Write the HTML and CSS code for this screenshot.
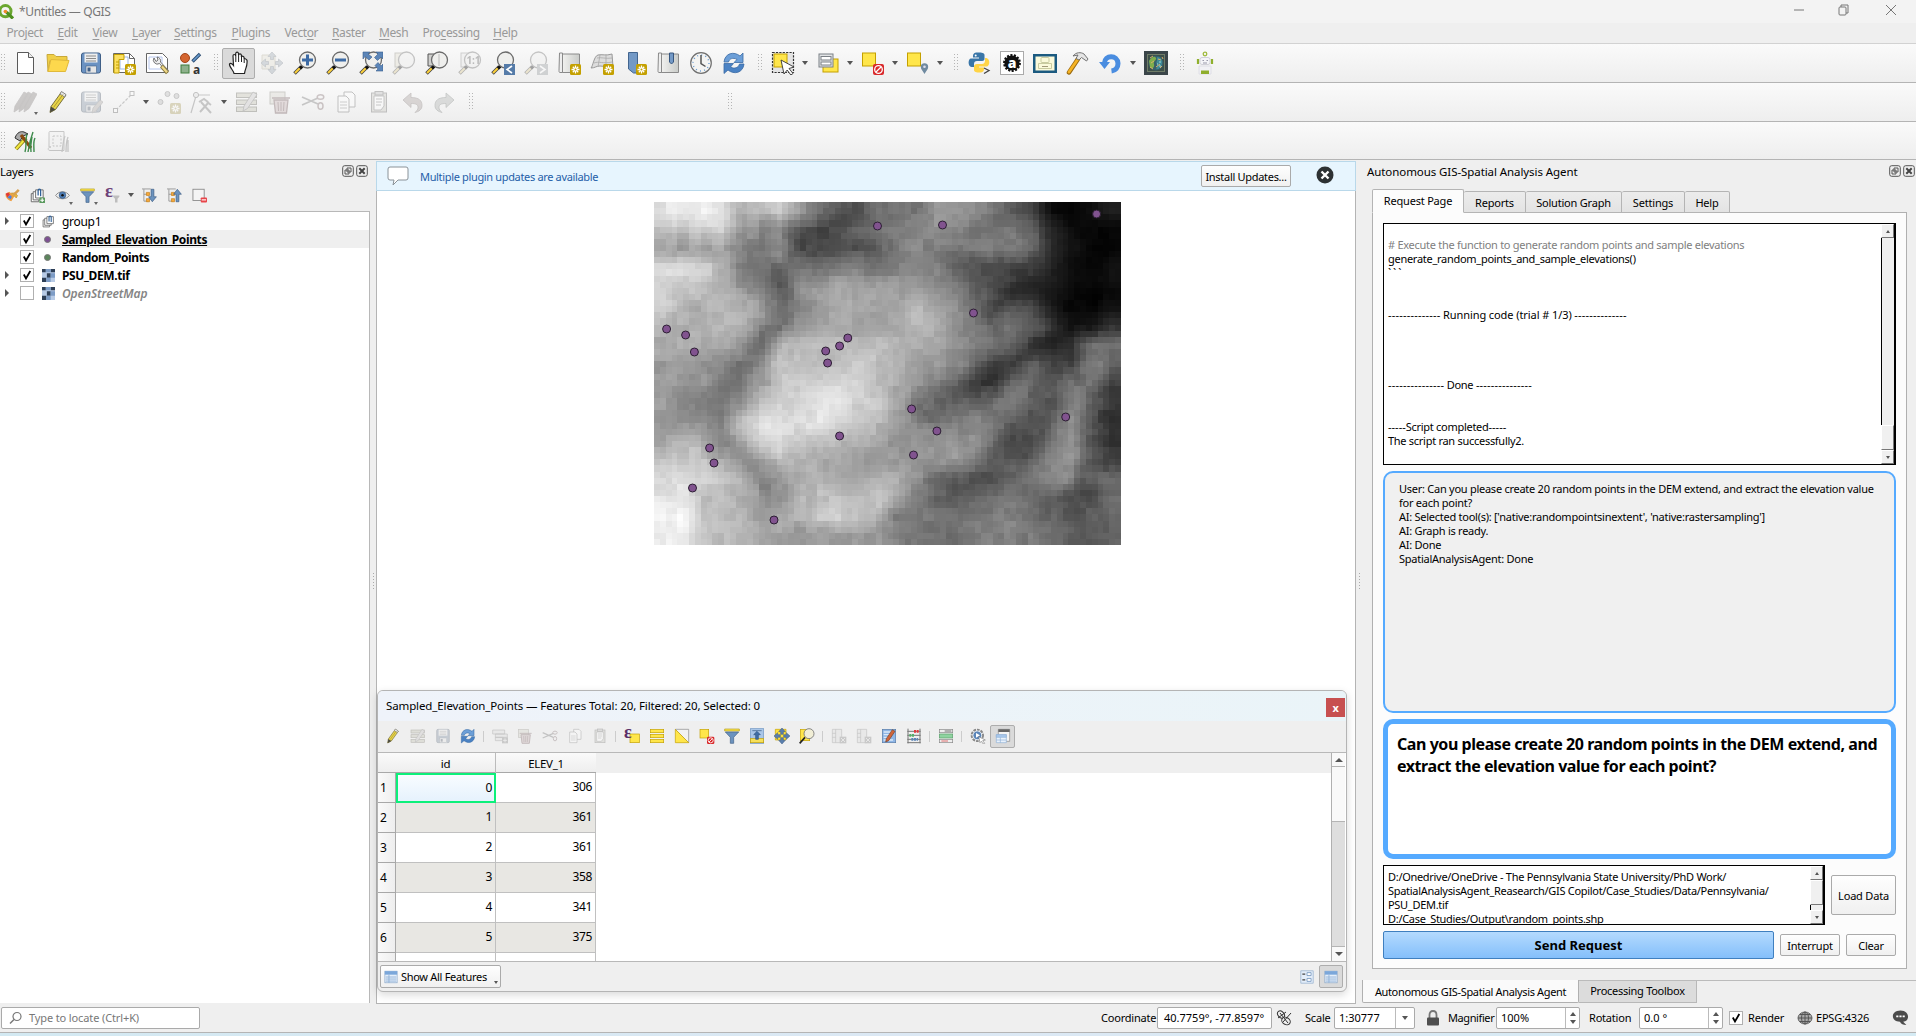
FILE: index.html
```html
<!DOCTYPE html>
<html lang="en">
<head>
<meta charset="utf-8">
<title>*Untitles — QGIS</title>
<link rel="stylesheet" href="styles.css">
</head>
<body>
<svg class="defs" width="0" height="0">
<defs>
<linearGradient id="gg" x1="0" y1="0" x2="1" y2="0"><stop offset="0" stop-color="#f2f2f0"/><stop offset="1" stop-color="#c9cbc8"/></linearGradient>
</defs>
<symbol id="star" viewBox="0 0 24 24"><rect x="13" y="13" width="11" height="11" rx="1.500" fill="#c4a000"/><path d="M18.500 14.500v8M14.500 18.500h8M15.800 15.800l5.400 5.400M21.200 15.800l-5.400 5.400" stroke="#fff" stroke-width="1.300"/><circle cx="18.500" cy="18.500" r="1" fill="#c4a000"/></symbol>
<symbol id="lens" viewBox="0 0 24 24"><path d="M1.500 22.500l7-7" stroke="#444" stroke-width="3.600"/><path d="M2 22l5-5" stroke="#fcd03a" stroke-width="2"/><path d="M7 17.500l3-3" stroke="#111" stroke-width="3"/><circle cx="14.500" cy="9" r="8" fill="#efefed" stroke="#6b6b6b" stroke-width="1.300"/></symbol>
<symbol id="new" viewBox="0 0 24 24"><path d="M4.500 1.500h11l5 5v16h-16z" fill="#fff" stroke="#5a5a5a"/><path d="M15.500 1.500v5h5" fill="#eee" stroke="#5a5a5a"/></symbol>
<symbol id="open" viewBox="0 0 24 24"><path d="M1 3.500h7l2 2h11v4H4L2 20.500z" fill="#f0cf47" stroke="#c9a93a"/><path d="M5 8.500l18 1-3.500 11H2z" fill="#fdd84d" stroke="#e0b93a"/></symbol>
<symbol id="save" viewBox="0 0 24 24"><rect x="2.500" y="2" width="19" height="20" rx="2" fill="#6b92c2" stroke="#3f5f87"/><rect x="5.500" y="2.500" width="13" height="9" fill="#eee"/><path d="M7 5h10M7 7.500h10M7 10h10" stroke="#8a8a8a"/><rect x="7" y="15" width="10.500" height="7" fill="#e6e6e6" stroke="#3f5f87" stroke-width=".6"/><rect x="8.500" y="16.500" width="3" height="4" fill="#3f5f87"/></symbol>
<symbol id="layout" viewBox="0 0 24 24"><path d="M1.500 2.500h16l5 5v14h-21z" fill="#fff" stroke="#666"/><path d="M17.500 2.500v5h5" fill="none" stroke="#666"/><path d="M8 6h8v12H8z" fill="#fff" stroke="#9db7e8"/><path d="M2 3.500h10v5H7V22H2z" fill="#fce060" stroke="#c4a000"/><path d="M4 11h3M4 14h3M4 17h3" stroke="#c4a000"/><use href="#star"/></symbol>
<symbol id="wrench" viewBox="0 0 24 24"><path d="M1.500 2.500h16l5 5v14h-21z" fill="#fff" stroke="#666"/><path d="M4 6h13v12H4z" fill="none" stroke="#b6c6ee"/><path d="M9 7a4 4 0 005.500 5.500L22 21l1.500-1.500-8-8.500A4 4 0 0012 6l1 3-2 1.500z" fill="#eee" stroke="#666" stroke-width=".9"/><path d="M16.500 15l6 7" stroke="#8a7a3a" stroke-width="4"/><path d="M17 15.500l5 5.800" stroke="#f0d98a" stroke-width="2.200"/></symbol>
<symbol id="style" viewBox="0 0 24 24"><circle cx="7" cy="7" r="4.500" fill="#d4652f" stroke="#a34417"/><rect x="3" y="14" width="8" height="8" fill="#8eb18c" stroke="#3f7d3c"/><path d="M14.500 10.500L22 3" stroke="#27486e" stroke-width="3.400"/><path d="M15 10l6.500-6.500" stroke="#6b9ccf" stroke-width="1.600"/><text x="15" y="22.500" font-family="Open Sans" font-size="12" fill="#333">a</text></symbol>
<symbol id="hand" viewBox="0 0 24 24"><path d="M7 22.500c-.5-3-5-7-4.500-9.500.8-1.500 2.500-.5 4 1.500L6 5c0-2 2.300-2 2.700 0V2.500c.3-1.800 2.500-1.800 2.800 0V4c.4-1.500 2.600-1.500 2.900.2V6c.7-1.300 2.700-1 2.700 1l1.400 1c1.600 0 1.800 2 1.500 4 0 4-2 6-2.500 10.500z" fill="#fff" stroke="#222" stroke-width="1.200"/><path d="M8.800 5v6M11.600 4v7M14.500 5.500V11M17.200 7v5" stroke="#222" stroke-width="1"/></symbol>
<symbol id="pansel" viewBox="0 0 24 24"><path d="M2 4h13v14H2z" fill="#e9e2bf" stroke="#b8ae7c"/><path d="M12 1l4 4.500h-2.500v3h-3v-3H8zM12 23l-4-4.500h2.500v-3h3v3H16zM1 12l4.500-4v2.500h3v3h-3V16zM23 12l-4.500 4v-2.500h-3v-3h3V8z" fill="#8fa9c4" stroke="#5e7993" stroke-width=".7"/></symbol>
<symbol id="pany" viewBox="0 0 24 24"><path d="M2 2h16v16H2z" fill="#ffe23c" stroke="#c4a000"/><path d="M12 0l5 5.500h-3v4h-4v-4H7zM12 24l-5-5.500h3v-4h4v4h3zM0 12l5.500-5v3h4v4h-4v3zM24 12l-5.500 5v-3h-4v-4h4V7z" fill="#5b7fae" stroke="#36567f" stroke-width=".7"/></symbol>
<symbol id="zin" viewBox="0 0 24 24"><use href="#lens"/><path d="M14.500 3.500v11M9 9h11" stroke="#3d6ba5" stroke-width="3"/></symbol>
<symbol id="zout" viewBox="0 0 24 24"><use href="#lens"/><path d="M9 9h11" stroke="#3d6ba5" stroke-width="3"/></symbol>
<symbol id="zfull" viewBox="0 0 24 24"><use href="#lens"/><path d="M4 1h7L9 3l4 3-3 3-4-3.500L4 8zM24 1v7l-2-2-3.500 3.500-3-3L19 3l-2-2zM24 20h-7l2-2-3-3.500 3-3L22 15l2-2z" fill="#5b85b8" stroke="#3b5f8d" stroke-width=".6"/></symbol>
<symbol id="zsel" viewBox="0 0 24 24"><rect x="3" y="2" width="11" height="14" fill="#e6dfb8" stroke="#8f8a6d"/><use href="#lens"/></symbol>
<symbol id="zlay" viewBox="0 0 24 24"><path d="M3 3h10v12H3z" fill="#d0d0ce" stroke="#555"/><use href="#lens"/><path d="M14 3v12" stroke="#bbb"/></symbol>
<symbol id="znat" viewBox="0 0 24 24"><rect x="3" y="2" width="11" height="14" fill="#e8e8e8" stroke="#888"/><use href="#lens"/><text x="8.500" y="13" font-family="Open Sans" font-weight="700" font-size="10" fill="#555">1:1</text></symbol>
<symbol id="zlast" viewBox="0 0 24 24"><use href="#lens"/><rect x="13" y="13" width="11" height="11" fill="#557ba8"/><path d="M21 15l-5 3.500 5 3.500" fill="none" stroke="#fff" stroke-width="1.600"/></symbol>
<symbol id="znext" viewBox="0 0 24 24"><use href="#lens"/><rect x="13" y="13" width="11" height="11" fill="#8f9aa5"/><path d="M16 15l5 3.500-5 3.500" fill="none" stroke="#fff" stroke-width="1.600"/></symbol>
<symbol id="map" viewBox="0 0 24 24"><path d="M5 3h17.500v18.500H5z" fill="url(#gg)" stroke="#8a8a8a"/><path d="M2.500 2h3v19.500H3c-1 0-1-1-1-2z" fill="#eee" stroke="#8a8a8a"/></symbol>
<symbol id="nmap" viewBox="0 0 24 24"><use href="#map"/><use href="#star"/></symbol>
<symbol id="n3d" viewBox="0 0 24 24"><path d="M1 17c2-2 3-12 7-13 4-1 8 1 14-1l1 13c-6 1-8-1-13-1-4 0-5 2-9 2z" fill="#ddd" stroke="#999"/><path d="M4 12c5-2 9 1 18-1M7 7c4-1 9 1 15 0M10 4L8 16M16 4v12" stroke="#aaa" fill="none" stroke-width=".8"/><use href="#star"/></symbol>
<symbol id="bmk" viewBox="0 0 24 24"><path d="M5.500 1.500h9V22h-4l-5-4z" fill="#7399c6" stroke="#42658f"/><use href="#star"/></symbol>
<symbol id="bmap" viewBox="0 0 24 24"><use href="#map"/><path d="M13.500 2h4v9l-2 2-2-2z" fill="#7399c6" stroke="#36567f"/></symbol>
<symbol id="clock" viewBox="0 0 24 24"><circle cx="12" cy="12" r="10.300" fill="#f4f4f2" stroke="#707070" stroke-width="1.200"/><circle cx="12" cy="12" r="8" fill="none" stroke="#6a9bd0" stroke-width="1.400" stroke-dasharray="1 3.190"/><path d="M12 4v8.500l4.500 3" fill="none" stroke="#555" stroke-width="1.500"/></symbol>
<symbol id="refresh" viewBox="0 0 24 24"><path d="M2 11C3 2 12 0 18 5l3-3v9.500h-9L15 8.500C11 6 7 8 6.500 11z" fill="#6c9fd8" stroke="#3b6ba5" stroke-width=".8"/><path d="M22 13c-1 9-10 11-16 6l-4 3.500v-10h9.500L8.500 16c4 2.500 8 .5 9-3z" fill="#4a82c4" stroke="#3b6ba5" stroke-width=".8"/></symbol>
<symbol id="sel" viewBox="0 0 24 24"><rect x="1.500" y="1.500" width="21" height="20" fill="#e4e4e4" stroke="#333" stroke-width="1.200" stroke-dasharray="2.200 1.200"/><rect x="3" y="3" width="13" height="13" fill="#ffe64a" stroke="#c4a000"/><path d="M10 9l13 7-5 1.500 4 5-2.200 1.500-3.600-5-3.200 4z" fill="#fff" stroke="#333" stroke-width=".9"/></symbol>
<symbol id="selv" viewBox="0 0 24 24"><rect x="7" y="8" width="15" height="13" fill="#ffe64a" stroke="#c4a000"/><rect x="3" y="3" width="14" height="13" fill="#e2e4e6" stroke="#7b8086"/><rect x="5" y="5.500" width="10" height="3.500" fill="#fff" stroke="#7b8086"/><rect x="5" y="11" width="10" height="3" fill="#fff" stroke="#7b8086"/></symbol>
<symbol id="dsel" viewBox="0 0 24 24"><rect x="1.500" y="2" width="13" height="13" fill="#ffe64a" stroke="#c4a000"/><rect x="12" y="13" width="11" height="11" rx="2" fill="#d9292b"/><circle cx="17.500" cy="18.500" r="3.800" fill="none" stroke="#fff" stroke-width="1.300"/><path d="M15 21l5-5" stroke="#fff" stroke-width="1.300"/></symbol>
<symbol id="spos" viewBox="0 0 24 24"><rect x="1.500" y="2" width="13" height="13" fill="#ffe64a" stroke="#c4a000"/><path d="M18.500 23c-1.500-3-3.700-4.500-3.700-7a3.700 3.700 0 017.400 0c0 2.500-2.200 4-3.700 7z" fill="#6f8aa0"/><circle cx="18.500" cy="15.800" r="1.300" fill="#dde"/></symbol>
<symbol id="python" viewBox="0 0 24 24"><path d="M11 1.500c-5 0-5 2-5 5h6v1H4c-3 0-3.500 8 .5 8.500h2.500v-3c0-2 1-3 3-3h5c2 0 2.500-1 2.500-2.500V4c0-2-3-2.500-6-2.500z" fill="#3a76a8"/><path d="M12 21.500c5 0 5-2 5-5h-5v-1h7.500c3.500 0 4-7.500 0-8.500H18v2.500c0 2-1 3.500-3 3.500h-5c-2 0-3 1-3 2.500V19c0 2 3 2.500 5 2.500z" fill="#ffd445"/><circle cx="8.700" cy="4.500" r="1" fill="#fff"/><path d="M17 17l5 2.500-5 3" stroke="#444" stroke-width="1.300" fill="none"/></symbol>
<symbol id="aa" viewBox="0 0 24 24"><rect x=".5" y=".5" width="23" height="23" fill="#fff" stroke="#aaa"/><circle cx="12" cy="12" r="7.600" fill="#111" stroke="#111" stroke-width="2.600" stroke-dasharray="2 1.400"/><text x="7.700" y="16.500" font-family="Open Sans" font-weight="800" font-size="14" fill="#fff">a</text></symbol>
<symbol id="frame" viewBox="0 0 24 24"><rect y="3" width="24" height="19" fill="#1b5a80"/><rect x="2.500" y="5.500" width="19" height="14" fill="#fbfadb"/><rect x="8" y="6.500" width="8" height="5" rx="1" fill="none" stroke="#c9cba0"/><path d="M5.500 12.500h13v5h-13z" fill="none" stroke="#c9cba0"/><path d="M9 15.500h6" stroke="#a39a7a"/></symbol>
<symbol id="hammer" viewBox="0 0 24 24"><path d="M3 21.500L12 8" stroke="#9a6a10" stroke-width="4.500" stroke-linecap="round"/><path d="M3 21L12 8" stroke="#f5b324" stroke-width="2.800" stroke-linecap="round"/><path d="M7 5c3-4 8-4 11-2l4 5-1.500 2-5-3.500L13 9l-3-1.500L12 4z" fill="#e5e5e5" stroke="#666" stroke-width=".9"/></symbol>
<symbol id="undo2" viewBox="0 0 24 24"><path d="M5.500 12c0-8 13-9 13.500.5 0 4-2.500 7-6.500 7.500" fill="none" stroke="#4a8de0" stroke-width="5"/><path d="M0 11h11l-5.500 7z" fill="#4a8de0"/></symbol>
<symbol id="ai" viewBox="0 0 24 24"><rect width="24" height="24" fill="#3a4549"/><rect x="3.500" y="3.500" width="17" height="17" fill="#3d4f49" stroke="#6f7c68"/><circle cx="12" cy="12" r="7.500" fill="#38606b"/><path d="M5 10c3-5 6-5 7-3s-3 3-2 6-2 6-4 3z" fill="#7fae4c"/><path d="M13 6c4 0 6 3 5 7s-4 6-6 5c3-3-1-6 1-8z" fill="#3f8a96"/><path d="M6 7l3-2M7 12l3-2M12 16l4-3M14 8l3 1M16 17l2-2M9 18l-3-2M18 6l1 2" stroke="#d9b06a"/><path d="M15 11h2M13 13h1M15 15h2" stroke="#a6dbe0"/></symbol>
<symbol id="robot" viewBox="0 0 24 24"><circle cx="12" cy="3" r="1.800" fill="none" stroke="#9fba3c" stroke-width="1.300"/><rect x="7" y="6.500" width="10" height="7" rx="2" fill="#f4f4f8" stroke="#d0d0d8"/><path d="M5 8v5M19 8v5" stroke="#8fb02c" stroke-width="2.200"/><path d="M9.500 9.500h1.500M13.500 9.500H15M10 12h4" stroke="#99a"/><path d="M6 15h12v8H6z" fill="#f1f1f5" stroke="#dedee6"/><rect x="8" y="19.500" width="8" height="3.500" fill="#8fae2c"/></symbol>
<symbol id="pencil" viewBox="0 0 24 24"><path d="M4 22.500l1-6L15.500 2l4.500 3L9.500 19.500z" fill="#e8d44a" stroke="#6a6232" stroke-width=".9"/><path d="M4 22.500l1-6 4.500 3z" fill="#4b4b42"/><path d="M14 4l1.500-2.500L20 4.500 18.500 7z" fill="#e9e9e9" stroke="#777" stroke-width=".8"/><path d="M7.500 17.500L17 4.500" stroke="#a8962a" stroke-width=".9"/></symbol>
<symbol id="rpencil" viewBox="0 0 24 24"><path d="M7 21l1-5L17 2.500l4 2.500-9.500 14z" fill="#d0643a" stroke="#6a3a22" stroke-width=".9"/></symbol>
<symbol id="pencils" viewBox="0 0 24 24"><path d="M1 22l1-6L11 2l4 2-8.500 14.500zM6 22l1-6L15 2l4 2-8 14.500zM11 22l1-6 8-14 4 2-8 14.500z" fill="#8a7b77" stroke="#7d716e" stroke-width=".8"/></symbol>
<symbol id="savep" viewBox="0 0 24 24"><use href="#save"/><path d="M13 23l1-5 7-8 3 2-7 9z" fill="#b0a5a0" stroke="#777" stroke-width=".7"/></symbol>
<symbol id="line" viewBox="0 0 24 24"><path d="M4 20L20 4" stroke="#777" stroke-width="1.200" stroke-dasharray="3 1.500"/><rect x="1.500" y="18.500" width="4" height="4" fill="#fff" stroke="#666"/><rect x="18" y="1.500" width="4" height="4" fill="#fff" stroke="#666"/></symbol>
<symbol id="pts" viewBox="0 0 24 24"><g fill="#b9b9b9" stroke="#777"><circle cx="3.500" cy="12" r="2.500"/><circle cx="10.500" cy="4" r="2.500"/><circle cx="19.500" cy="6" r="2.500"/></g><use href="#star"/></symbol>
<symbol id="vert" viewBox="0 0 24 24"><path d="M6 6L1 23M6 5h14" stroke="#777" stroke-width="1.200"/><circle cx="6" cy="5" r="2.600" fill="#ddd" stroke="#666"/><path d="M10 22l9-10M11 12l10 11M9 12l5-3 4 3M17 12l4 3" stroke="#777" stroke-width="2" fill="none"/></symbol>
<symbol id="medit" viewBox="0 0 24 24"><g fill="#c5c29a" stroke="#6d6a50"><rect x="1.500" y="3" width="20" height="4.500"/><rect x="1.500" y="10" width="20" height="4.500"/><rect x="1.500" y="17" width="20" height="4.500"/></g><path d="M8 21l1-5L18 2l4 2.500-9.500 14z" fill="#c9c4c4" stroke="#666" stroke-width=".8"/></symbol>
<symbol id="trash" viewBox="0 0 24 24"><rect x="2" y="2" width="15" height="12" fill="#d9d5bd" stroke="#8a8670"/><path d="M4 8h18M6 10h14l-1.500 13h-11z" fill="#dba8ac" stroke="#8f4e55" stroke-width="1.300"/><path d="M10 12l.5 9M13 12v9M16 12l-.5 9" stroke="#8f4e55"/></symbol>
<symbol id="cut" viewBox="0 0 24 24"><path d="M1 7l16 7M1 15L17 8" stroke="#777" stroke-width="1.800"/><ellipse cx="19.500" cy="7" rx="3.300" ry="2.300" fill="none" stroke="#996a6f" stroke-width="1.500"/><ellipse cx="19.500" cy="16" rx="2.500" ry="3.300" fill="none" stroke="#996a6f" stroke-width="1.500"/></symbol>
<symbol id="copy" viewBox="0 0 24 24"><g fill="#fff" stroke="#666"><path d="M10 2h8l3 3v12H10z"/><path d="M4 6h8l3 3v13H4z"/></g><path d="M6 12h7M6 15h7M6 18h7" stroke="#888"/></symbol>
<symbol id="paste" viewBox="0 0 24 24"><rect x="4.500" y="3" width="15" height="19" fill="#c9c6b5" stroke="#666"/><path d="M7 6h10v10l-3 4H7z" fill="#fff" stroke="#777"/><rect x="8" y="1.500" width="8" height="3.500" fill="#bbb" stroke="#666"/><path d="M9 9h6M9 12h6M9 15h5" stroke="#777"/></symbol>
<symbol id="undo" viewBox="0 0 24 24"><path d="M3 10l8-7v4.500c8 0 11 3 11 8 0 4-3 6-7 7 2-2 3-3 3-5 0-3-2-4-7-4v4z" fill="#b39a94" stroke="#7f6a66" stroke-width=".8"/></symbol>
<symbol id="redo" viewBox="0 0 24 24"><path d="M21 10l-8-7v4.500c-8 0-11 3-11 8 0 4 3 6 7 7-2-2-3-3-3-5 0-3 2-4 7-4v4z" fill="#a9b0ac" stroke="#68736e" stroke-width=".8"/></symbol>
<symbol id="grass" viewBox="0 0 24 24"><path d="M3 20L13 9" stroke="#877a1a" stroke-width="4"/><path d="M3 20L13 9" stroke="#f0e640" stroke-width="2.200"/><path d="M2 9c2-6 6-7 9-6l4 2-5 2-3 5z" fill="#aaa" stroke="#333"/><path d="M8 6l10 13" stroke="#8a4a10" stroke-width="3"/><path d="M12 23c2-6 0-12 2-18M15 23c1-7 2-12 5-20M18 23c-1-6 0-9 1-15M21 23c0-7-1-10 1-14" stroke="#3d8a4b" stroke-width="1.400" fill="none"/></symbol>
<symbol id="grass2" viewBox="0 0 24 24"><path d="M4 2.500h14v19H4c-3 0-2-4 1-3.500H3V4c0-1 0-1.500 1-1.500z" fill="#eee" stroke="#777"/><rect x="7" y="7" width="8" height="10" fill="none" stroke="#777" stroke-dasharray="2 1.500"/><path d="M16 23c1-6 1-11 3-16M20 23c0-7 0-10 2-15M22 23V11" stroke="#777" stroke-width="1.300" fill="none"/></symbol>
<symbol id="brush" viewBox="0 0 24 24"><path d="M1 9l6-3 8 7-5 8c-4-1-7-4-9-8z" fill="#ef9d3e"/><path d="M1 9l4-2 3 3-4 5z" fill="#e03838"/><path d="M4 15l4-4 3 3-2 4z" fill="#4a7fe0"/><path d="M10 8l8 8 2-4-4-4z" fill="#e9b93c" stroke="#c48a2a"/><path d="M14 11l8-8" stroke="#d8a050" stroke-width="4"/></symbol>
<symbol id="group" viewBox="0 0 24 24"><g fill="#fff" stroke="#666" stroke-width="1.500"><path d="M2 9h12v13H2z"/><path d="M5 6h12v13H5z"/><path d="M9 3h12v13H9z"/></g><path d="M13 12V4c0-3 4-3 4 0v9" fill="none" stroke="#2f5f96" stroke-width="2"/></symbol>
<symbol id="addgroup" viewBox="0 0 24 24"><use href="#group"/><rect x="15" y="15" width="9" height="9" rx="1" fill="#5a9a5e"/><path d="M19.500 16.500v6M16.500 19.500h6" stroke="#fff" stroke-width="1.800"/></symbol>
<symbol id="eye" viewBox="0 0 24 24"><path d="M1 12c5-8 17-8 22 0-5 7-17 7-22 0z" fill="#eee" stroke="#888" stroke-width="1.500"/><circle cx="12" cy="11.500" r="5.300" fill="#4d7db5" stroke="#36567f"/><circle cx="12" cy="11.500" r="2" fill="#111"/></symbol>
<symbol id="funnel" viewBox="0 0 24 24"><path d="M1 1.500h22v3H1z" fill="#ffe64a" stroke="#b09a20"/><path d="M2 6h20l-7.500 8v9h-5v-9z" fill="#6c93be" stroke="#3f5f87"/></symbol>
<symbol id="eps" viewBox="0 0 24 24"><text x="0" y="15" font-family="Liberation Serif" font-weight="700" font-size="30" fill="#6d4379">ε</text><path d="M13 12h10v2l-3 3v6h-4v-6l-3-3z" fill="#bdbdbd"/></symbol>
<symbol id="expand" viewBox="0 0 24 24"><path d="M0 1.500h14M3 2v19h7M3 10h7" stroke="#8a8a8a" stroke-width="1.300" fill="none"/><path d="M7 7h5v5H7zM7 17h5v5H7z" fill="#f6a83a" stroke="#c07a10"/><path d="M14.500 2h4.500v12h4l-6.500 8-6-8h4z" fill="#6c93be" stroke="#36567f"/></symbol>
<symbol id="collapse" viewBox="0 0 24 24"><path d="M0 1.500h14M3 2v19h7M3 10h7" stroke="#8a8a8a" stroke-width="1.300" fill="none"/><path d="M7 7h5v5H7zM7 17h5v5H7z" fill="#f6a83a" stroke="#c07a10"/><path d="M14.500 22h4.500V10h4l-6.500-8-6 8h4z" fill="#6c93be" stroke="#36567f"/></symbol>
<symbol id="remove" viewBox="0 0 24 24"><rect x="1.500" y="2" width="18" height="18" fill="#f4f4f4" stroke="#888" stroke-width="1.400"/><rect x="14" y="15" width="10" height="8" rx="1.500" fill="#e8454a"/><path d="M15.500 19h7" stroke="#fff" stroke-width="1.800"/></symbol>
<symbol id="raster" viewBox="0 0 12 12"><rect width="12" height="12" fill="#b8cbe6"/><path d="M0 0h3.500v3H0zM8 0h4v3H8zM4.500 4h3.500v4H4.500zM0 8h4v4H0z" fill="#2e3f56"/><path d="M3.500 0H8v3H3.500zM8 4h4v4H8zM4 8h4v4H4z" fill="#7d9cc6"/></symbol>
<symbol id="rows" viewBox="0 0 24 24"><g fill="#ffe64a" stroke="#c4a000"><rect x="2" y="2" width="20" height="5"/><rect x="2" y="9.500" width="20" height="5"/><rect x="2" y="17" width="20" height="5"/></g></symbol>
<symbol id="inv" viewBox="0 0 24 24"><path d="M2 2h20v20z" fill="#f2f2f2" stroke="#888"/><path d="M2 2v20h20z" fill="#ffe64a" stroke="#c4a000"/></symbol>
<symbol id="esel" viewBox="0 0 24 24"><rect x="9" y="9" width="14" height="13" fill="#ffe64a" stroke="#c4a000"/><text x="0" y="15" font-family="Liberation Serif" font-weight="700" font-size="27" fill="#5b3068">ε</text></symbol>
<symbol id="totop" viewBox="0 0 24 24"><rect x="2" y="1" width="20" height="22" fill="#a9c6e8" stroke="#6f95c2"/><rect x="2" y="16" width="20" height="6" fill="#f7e05a" stroke="#c4a000"/><path d="M5 4h14M12 5l5 5h-3v7h-4v-7H7z" fill="#3f6ea8" stroke="#2f5580"/></symbol>
<symbol id="zmy" viewBox="0 0 24 24"><rect x="2" y="2" width="14" height="17" fill="#ffe64a" stroke="#c4a000"/><path d="M1 23l8-9" stroke="#222" stroke-width="2.500"/><circle cx="15" cy="8.500" r="7.500" fill="#f1eed6" stroke="#777" stroke-width="1.300"/></symbol>
<symbol id="tbl" viewBox="0 0 24 24"><rect x="1.500" y="2" width="21" height="20" fill="#e4eefa" stroke="#7b9cc2"/><rect x="1.500" y="2" width="21" height="6" fill="#7ba7da"/><path d="M8.500 8v14M3 12h18M3 15.500h18M3 19h18" stroke="#8fb0d6" stroke-width="1.500"/></symbol>
<symbol id="addrow" viewBox="0 0 24 24"><path d="M1 3h18v6H1zM5 9h18v5H5zM5 14h12v5H5z" fill="#ddd" stroke="#777"/><rect x="15" y="14" width="9" height="9" fill="#888"/><path d="M19.500 15.500v6M16.500 18.500h6" stroke="#fff"/></symbol>
<symbol id="col" viewBox="0 0 24 24"><path d="M2 2h14v20H2zM7 2v20M2 8h5M2 14h5" fill="#ddd" stroke="#777"/><rect x="13" y="13" width="10" height="10" fill="#888"/><path d="M15 15l6 6M21 15l-6 6" stroke="#fff"/></symbol>
<symbol id="calced" viewBox="0 0 24 24"><rect x="2" y="2" width="20" height="20" fill="#8fb6e6" stroke="#5579a5"/><path d="M4 6h12M4 10h10M4 14h8M4 18h14" stroke="#dce9f8" stroke-width="2"/><use href="#rpencil"/></symbol>
<symbol id="abacus" viewBox="0 0 24 24"><path d="M3 1v22M21 1v22M2 5h20M2 11h20M2 17h20M2 22h20" stroke="#777" stroke-width="1.500"/><path d="M12 5h7" stroke="#e0393d" stroke-width="4" stroke-dasharray="3 1"/><path d="M5 11h7" stroke="#55b06a" stroke-width="4" stroke-dasharray="3 1"/><path d="M8 17h10" stroke="#5b85b8" stroke-width="4" stroke-dasharray="3 1"/></symbol>
<symbol id="cond" viewBox="0 0 24 24"><g fill="#eee" stroke="#888"><rect x="2" y="2" width="20" height="5"/><rect x="2" y="9" width="20" height="6" fill="#8fd3a0" stroke="#5a9f6a"/><rect x="2" y="17" width="20" height="5"/></g><path d="M10 4.500h10" stroke="#333"/><path d="M5 19.500h10" stroke="#d33"/></symbol>
<symbol id="act" viewBox="0 0 24 24"><circle cx="11" cy="11" r="8.500" fill="none" stroke="#888" stroke-width="3" stroke-dasharray="4 1.500"/><circle cx="11" cy="11" r="6.500" fill="#5b85b8" stroke="#fff"/><path d="M9 7.500l6 3.500-6 3.500z" fill="#fff"/><path d="M13 13l10 5-4 1 3 4-2 1-3-4-2 2z" fill="#fff" stroke="#666" stroke-width=".8"/></symbol>
<symbol id="dock" viewBox="0 0 24 24"><path d="M5 2h17v18H5z" fill="#f4f4f4" stroke="#888"/><path d="M5 2h17v4H5z" fill="#666"/><path d="M2 10h15v12H2z" fill="#e9f2fc" stroke="#8fb0d6"/><path d="M2 10h15v4H2zM8 14v8M2 18h15" fill="#a9c9ee" stroke="#8fb0d6"/></symbol>
<symbol id="form" viewBox="0 0 24 24"><rect x="1.500" y="1.500" width="21" height="21" fill="#e4eefa" stroke="#7b9cc2"/><path d="M4 7h5M4 17h5" stroke="#444" stroke-width="2"/><path d="M12 4.500h7v5h-7zM12 14.500h7v5h-7z" fill="#fff" stroke="#7b9cc2" stroke-width="1.500"/></symbol>
<symbol id="float" viewBox="0 0 12 12"><rect x=".7" y=".7" width="10.600" height="10.600" rx="2" fill="none" stroke="#555"/><path d="M5 3h4v4H5zM3 5h4v4H3z" fill="none" stroke="#555"/></symbol>
<symbol id="close" viewBox="0 0 12 12"><rect x=".7" y=".7" width="10.600" height="10.600" rx="2" fill="none" stroke="#555"/><path d="M3.300 3.300l5.400 5.400M8.700 3.300L3.300 8.700" stroke="#444" stroke-width="2"/></symbol>
<symbol id="tick" viewBox="0 0 12 12"><path d="M2.800 5.500l2.200 4L9.300 2" fill="none" stroke="#000" stroke-width="1.800"/></symbol>
</svg>

<header class="titlebar">
  <svg class="logo" viewBox="0 0 14 14"><circle cx="6" cy="6.700" r="5.200" fill="none" stroke="#6aa62e" stroke-width="2.800"/><path d="M7 7.500l6 6" stroke="#4d8f1e" stroke-width="3"/><circle cx="6" cy="7" r="1.700" fill="#ee8a2a"/></svg>
  <span class="wtitle">*Untitles — QGIS</span>
  <svg class="wctl" viewBox="0 0 104 14"><path d="M2 7h10M94 2l10 10M104 2L94 12" stroke="#777" fill="none"/><rect x="47" y="4" width="7" height="8" rx="1" fill="none" stroke="#777"/><path d="M49 4V2h7v8h-2" fill="none" stroke="#777"/></svg>
</header>
<nav class="menubar">
  <span class="m1">Pro<u>j</u>ect</span><span class="m2"><u>E</u>dit</span><span class="m3"><u>V</u>iew</span><span class="m4"><u>L</u>ayer</span><span class="m5"><u>S</u>ettings</span><span class="m6"><u>P</u>lugins</span><span class="m7">Vect<u>o</u>r</span><span class="m8"><u>R</u>aster</span><span class="m9"><u>M</u>esh</span><span class="m10">Pro<u>c</u>essing</span><span><u>H</u>elp</span>
</nav>
<div class="toolbar">
  <i class="grip first"></i>
  <b><svg><use href="#new"/></svg></b><b><svg><use href="#open"/></svg></b><b><svg><use href="#save"/></svg></b><b><svg><use href="#layout"/></svg></b><b><svg><use href="#wrench"/></svg></b><b><svg><use href="#style"/></svg></b>
  <i class="grip"></i>
  <b class="on"><svg><use href="#hand"/></svg></b><b class="off"><svg><use href="#pansel"/></svg></b><b><svg><use href="#zin"/></svg></b><b><svg><use href="#zout"/></svg></b><b><svg><use href="#zfull"/></svg></b><b class="off"><svg><use href="#zsel"/></svg></b><b><svg><use href="#zlay"/></svg></b><b class="off"><svg><use href="#znat"/></svg></b><b><svg><use href="#zlast"/></svg></b><b class="off"><svg><use href="#znext"/></svg></b><b><svg><use href="#nmap"/></svg></b><b><svg><use href="#n3d"/></svg></b><b><svg><use href="#bmk"/></svg></b><b><svg><use href="#bmap"/></svg></b><b><svg><use href="#clock"/></svg></b><b><svg><use href="#refresh"/></svg></b>
  <i class="grip"></i>
  <b><svg><use href="#sel"/></svg></b><em></em><b><svg><use href="#selv"/></svg></b><em></em><b><svg><use href="#dsel"/></svg></b><em></em><b><svg><use href="#spos"/></svg></b><em></em>
  <i class="grip"></i>
  <b><svg><use href="#python"/></svg></b><b><svg><use href="#aa"/></svg></b><b><svg><use href="#frame"/></svg></b><b><svg><use href="#hammer"/></svg></b><b><svg><use href="#undo2"/></svg></b><em></em><b><svg><use href="#ai"/></svg></b>
  <i class="grip"></i>
  <b><svg><use href="#robot"/></svg></b>
</div>
<div class="toolbar">
  <i class="grip first"></i>
  <b class="off corner"><svg><use href="#pencils"/></svg></b><b><svg><use href="#pencil"/></svg></b><b class="off"><svg><use href="#savep"/></svg></b><b class="off"><svg><use href="#line"/></svg></b><em></em><b class="off"><svg><use href="#pts"/></svg></b><b class="off"><svg><use href="#vert"/></svg></b><em></em><b class="off"><svg><use href="#medit"/></svg></b><b class="off"><svg><use href="#trash"/></svg></b><b class="off"><svg><use href="#cut"/></svg></b><b class="off"><svg><use href="#copy"/></svg></b><b class="off"><svg><use href="#paste"/></svg></b><b class="off"><svg><use href="#undo"/></svg></b><b class="off"><svg><use href="#redo"/></svg></b>
  <i class="grip"></i><i class="grip far"></i>
</div>
<div class="toolbar last">
  <i class="grip first"></i>
  <b><svg><use href="#grass"/></svg></b><b class="off"><svg><use href="#grass2"/></svg></b>
</div>

<main class="work">
  <section class="layers">
    <div class="docktitle"><span>Layers</span><svg><use href="#float"/></svg><svg><use href="#close"/></svg></div>
    <div class="ltools">
      <b><svg><use href="#brush"/></svg></b><b><svg><use href="#addgroup"/></svg></b><b class="corner"><svg><use href="#eye"/></svg></b><b class="corner"><svg><use href="#funnel"/></svg></b><b><svg><use href="#eps"/></svg></b><em></em><b><svg><use href="#expand"/></svg></b><b><svg><use href="#collapse"/></svg></b><b><svg><use href="#remove"/></svg></b>
    </div>
    <div class="tree">
      <div class="node"><i class="tw"></i><span class="cb"><svg><use href="#tick"/></svg></span><svg class="ico"><use href="#group"/></svg><span class="nm">group1</span></div>
      <div class="node cur"><i class="tw none"></i><span class="cb"><svg><use href="#tick"/></svg></span><span class="dot purple"></span><span class="nm bold ul">Sampled_Elevation_Points</span></div>
      <div class="node"><i class="tw none"></i><span class="cb"><svg><use href="#tick"/></svg></span><span class="dot green"></span><span class="nm bold">Random_Points</span></div>
      <div class="node"><i class="tw"></i><span class="cb"><svg><use href="#tick"/></svg></span><svg class="ico"><use href="#raster"/></svg><span class="nm bold">PSU_DEM.tif</span></div>
      <div class="node"><i class="tw"></i><span class="cb"></span><svg class="ico"><use href="#raster"/></svg><span class="nm gone">OpenStreetMap</span></div>
    </div>
  </section>
  <div class="split"><i></i></div>
  <section class="center">
    <div class="msg">
      <svg class="bubble" viewBox="0 0 22 20"><path d="M3 1h16q2 0 2 2v9q0 2-2 2h-8l-5 5 1-5H3q-2 0-2-2V3q0-2 2-2z" fill="#fff" stroke="#8a9298"/></svg>
      <span class="msgtext">Multiple plugin updates are available</span>
      <button class="btn inst">Install Updates...</button>
      <svg class="mclose" viewBox="0 0 18 18"><circle cx="9" cy="9" r="8.500" fill="#2d3133"/><path d="M5.500 5.500l7 7M12.500 5.500l-7 7" stroke="#fff" stroke-width="2.400"/></svg>
    </div>
    <div class="mapview">
      <div class="raster">
        <canvas id="dem" width="80" height="56"></canvas>
        <svg class="pins" viewBox="0 0 467 343" id="pins"></svg>
      </div>
    </div>
    <div class="attr">
      <div class="atitle"><span>Sampled_Elevation_Points — Features Total: 20, Filtered: 20, Selected: 0</span><button>x</button></div>
      <div class="atools">
        <b><svg><use href="#pencil"/></svg></b><b class="off"><svg><use href="#medit"/></svg></b><b class="off"><svg><use href="#save"/></svg></b><b><svg><use href="#refresh"/></svg></b><s></s>
        <b class="off"><svg><use href="#addrow"/></svg></b><b class="off"><svg><use href="#trash"/></svg></b><b class="off"><svg><use href="#cut"/></svg></b><b class="off"><svg><use href="#copy"/></svg></b><b class="off"><svg><use href="#paste"/></svg></b><s></s>
        <b><svg><use href="#esel"/></svg></b><b><svg><use href="#rows"/></svg></b><b><svg><use href="#inv"/></svg></b><b><svg><use href="#dsel"/></svg></b><b><svg><use href="#funnel"/></svg></b><b><svg><use href="#totop"/></svg></b><b><svg><use href="#pany"/></svg></b><b><svg><use href="#zmy"/></svg></b><s></s>
        <b class="off"><svg><use href="#col"/></svg></b><b class="off"><svg><use href="#col"/></svg></b><b><svg><use href="#calced"/></svg></b><b><svg><use href="#abacus"/></svg></b><s></s>
        <b><svg><use href="#cond"/></svg></b><s></s><b><svg><use href="#act"/></svg></b><b class="on"><svg><use href="#dock"/></svg></b>
      </div>
      <div class="grid">
        <div class="cells">
          <div class="hd"><span></span><span>id</span><span>ELEV_1</span></div>
          <div class="rw"><span>1</span><span class="pick">0</span><span>306</span></div>
          <div class="rw"><span>2</span><span>1</span><span>361</span></div>
          <div class="rw"><span>3</span><span>2</span><span>361</span></div>
          <div class="rw"><span>4</span><span>3</span><span>358</span></div>
          <div class="rw"><span>5</span><span>4</span><span>341</span></div>
          <div class="rw"><span>6</span><span>5</span><span>375</span></div>
          <div class="rw"><span></span><span></span><span></span></div>
        </div>
        <div class="sbar"><span class="up"></span><span class="thumb"></span><span class="track"></span><span class="down"></span></div>
      </div>
      <div class="afoot"><button class="btn show"><svg><use href="#tbl"/></svg><span>Show All Features</span><i></i></button><b><svg><use href="#form"/></svg></b><b class="on"><svg><use href="#tbl"/></svg></b></div>
    </div>
  </section>
  <div class="split right"><i></i></div>
  <section class="agent">
    <div class="docktitle"><span class="agt">Autonomous GIS-Spatial Analysis Agent</span><svg><use href="#float"/></svg><svg><use href="#close"/></svg></div>
    <div class="tabs"><span class="t1 act">Request Page</span><span class="t2">Reports</span><span class="t3">Solution Graph</span><span class="t4">Settings</span><span class="t5">Help</span></div>
    <div class="pane">
      <div class="log">
        <div class="logtext">
          <p>&nbsp;</p>
          <p class="cm"># Execute the function to generate random points and sample elevations</p>
          <p>generate_random_points_and_sample_elevations()</p>
          <p class="ticks">&#96;&#96;&#96;</p>
          <p class="gap2"><span class="dash">--------------</span> <span class="run">Running code (trial # 1/3)</span> <span class="dash">--------------</span></p>
          <p class="gap4"><span class="dash">---------------</span> Done <span class="dash">---------------</span></p>
          <p class="gap2"><span class="dash2">-----</span>Script completed<span class="dash2">-----</span></p>
          <p>The script ran successfully2.</p>
        </div>
        <div class="wbar"><span class="up"></span><span class="gap"></span><span class="knob"></span><span class="down"></span></div>
      </div>
      <div class="chat">User: Can you please create 20 random points in the DEM extend, and extract the elevation value<br>for each point?<br>AI: Selected tool(s): ['native:randompointsinextent', 'native:rastersampling']<br>AI: Graph is ready.<br>AI: Done<br>SpatialAnalysisAgent: Done</div>
      <div class="ask">Can you please create 20 random points in the DEM extend, and<br>extract the elevation value for each point?</div>
      <div class="datarow">
        <div class="data">
          <div class="paths">D:/Onedrive/OneDrive - The Pennsylvania State University/PhD Work/<br>SpatialAnalysisAgent_Reasearch/GIS Copilot/Case_Studies/Data/Pennsylvania/<br>PSU_DEM.tif<br>D:/Case_Studies/Output\random_points.shp</div>
          <div class="wbar"><span class="up"></span><span class="knob"></span><span class="gap"></span><span class="down"></span></div>
        </div>
        <button class="btn load">Load Data</button>
      </div>
      <div class="sendrow"><button class="send">Send Request</button><button class="btn intr">Interrupt</button><button class="btn clr">Clear</button></div>
    </div>
    <div class="btabs"><span class="bt act">Autonomous GIS-Spatial Analysis Agent</span><span class="bt pt">Processing Toolbox</span></div>
  </section>
</main>
<footer class="status">
  <div class="search"><svg viewBox="0 0 14 14"><circle cx="8" cy="5.500" r="4" fill="none" stroke="#777" stroke-width="1.200"/><path d="M5 8.500L1 12.500" stroke="#777" stroke-width="1.400"/></svg>Type to locate (Ctrl+K)</div>
  <span class="lab c1">Coordinate</span><div class="fld coord">40.7759°, -77.8597°</div>
  <svg class="mouse" viewBox="0 0 16 16"><g fill="#eee" stroke="#333"><ellipse cx="5" cy="4.500" rx="3" ry="4" transform="rotate(-40 5 4.500)"/><ellipse cx="10" cy="11" rx="4.500" ry="3.500" transform="rotate(30 10 11)"/></g><path d="M2 8l8-6M7 12l8-9M4 3l8 10" stroke="#333"/></svg>
  <span class="lab">Scale</span><div class="fld scale">1:30777<i class="dd"></i></div>
  <svg class="lock" viewBox="0 0 14 16"><path d="M3.500 8V5q0-4 3.500-4t3.500 4v3" fill="none" stroke="#777" stroke-width="1.800"/><rect x="1" y="7.500" width="12" height="8" rx="1" fill="#4f4f4f"/></svg>
  <span class="lab mg">Magnifier</span><div class="fld mag">100%<i class="sp"></i></div>
  <span class="lab rt">Rotation</span><div class="fld rot">0.0 °<i class="sp"></i></div>
  <span class="cb"><svg><use href="#tick"/></svg></span><span class="lab rd">Render</span>
  <svg class="globe" viewBox="0 0 16 16"><ellipse cx="8" cy="8" rx="7" ry="6" fill="#aaa" stroke="#666"/><path d="M1 8h14M8 2v12M3 4.500h10M3 11.500h10" stroke="#555" fill="none"/><ellipse cx="8" cy="8" rx="3.500" ry="6" fill="none" stroke="#555"/></svg>
  <span class="lab ep">EPSG:4326</span>
  <svg class="talk" viewBox="0 0 16 16"><path d="M8 1.500c9 0 9 10.500 2.500 10.500l3 3c-3 0-5-1-6-3C-1.500 12-1.500 1.500 8 1.500z" fill="#4c4c4c"/><path d="M4 7h2M7 7h2M10 7h2" stroke="#fff" stroke-width="1.600"/></svg>
</footer>
<div class="deskstrip"></div>
<script src="dem.js"></script>
</body>
</html>
```
FILE: styles.css
```css
/* Main window */
* { box-sizing: border-box; }
body { margin: 0; width: 1916px; height: 1036px; overflow: hidden; background: #efefef; color: #000; font-family: "Noto Sans", "Open Sans", sans-serif; font-size: 11px; letter-spacing: -.2px; display: flex; flex-direction: column; }
.defs { position: absolute; }
button { font: inherit; letter-spacing: inherit; color: #000; padding: 0; margin: 0; }
p { margin: 0; }
b { display: flex; align-items: center; justify-content: center; flex: none; position: relative; }

.titlebar { height: 23px; background: #f3f3f3; display: flex; align-items: center; flex: none; }
.logo { width: 15px; height: 15px; margin-left: -1px; margin-top: -1px; }
.wtitle { margin-left: 5px; color: #777; font-size: 12px; letter-spacing: -.35px; flex: 1; }
.wctl { width: 104px; height: 14px; margin-right: 20px; margin-top: -3px; }
.menubar { height: 21px; flex: none; display: flex; align-items: center; padding: 0 0 1px 6.5px; color: #999; font-size: 12px; letter-spacing: -.4px; border-bottom: 1px solid #d2d2d2; }
.menubar span { flex: none; white-space: nowrap; }
.menubar u { text-underline-offset: 2px; }
.m1 { width: 51px; } .m2 { width: 35px; } .m3 { width: 39.5px; } .m4 { width: 42px; } .m5 { width: 57.5px; } .m6 { width: 53px; } .m7 { width: 47.5px; } .m8 { width: 47px; } .m9 { width: 43.5px; } .m10 { width: 70.5px; }

.toolbar { height: 39px; flex: none; display: flex; align-items: center; background: linear-gradient(#fafafa, #eee); border-bottom: 1px solid #b4b4b4; }
.toolbar.last { height: 38px; }
.toolbar b { width: 33px; height: 31px; }
.toolbar svg { width: 24px; height: 24px; }
.on { background: #dadada; border: 1px solid #adadad; border-radius: 2px; }
.off svg { opacity: .36; filter: grayscale(.6); }
.grip { width: 16px; height: 18px; flex: none; background: linear-gradient(90deg, transparent 8px, #b5b5b5 8px 9px, transparent 9px 11px, #b5b5b5 11px 12px, transparent 12px); mask: repeating-linear-gradient(#000 0 1px, transparent 1px 3px); }
.grip.first { width: 8px; background: linear-gradient(90deg, transparent 1px, #b5b5b5 1px 2px, transparent 2px 4px, #b5b5b5 4px 5px, transparent 5px); }
.grip.far { margin-left: 243px; }
em { width: 12px; flex: none; display: flex; justify-content: center; }
em::before { content: ""; border: 3.5px solid transparent; border-top: 4px solid #555; border-bottom: 0; }
.corner::after { content: ""; position: absolute; right: 3px; bottom: 3px; border: 2px solid transparent; border-top: 3px solid #666; border-bottom: 0; }

.work { height: 843px; flex: none; display: flex; }

/* Layers dock */
.layers { width: 370px; flex: none; display: flex; flex-direction: column; }
.docktitle { height: 22px; display: flex; align-items: center; flex: none; font-size: 11.5px; letter-spacing: -.25px; }
.docktitle span { flex: 1; }
.docktitle svg { width: 12px; height: 12px; margin-left: 2px; }
.layers .docktitle svg:last-child { margin-right: 2px; }
.agt { letter-spacing: -.08px; }
.ltools { height: 29px; display: flex; align-items: center; padding-bottom: 3px; flex: none; }
.ltools b { width: 25px; height: 22px; }
.ltools svg { width: 15px; height: 15px; }
.ltools .corner::after { right: 2px; bottom: 1px; }
.tree { flex: 1; background: #fff; border-top: 1px solid #b8b8b8; border-right: 1px solid #b8b8b8; }
.node { height: 18px; display: flex; align-items: center; }
.node.cur { background: #efefef; }
.tw { margin: 0 11px 0 5px; flex: none; border: 4px solid transparent; border-left: 4px solid #555; border-right: 0; }
.tw.none { visibility: hidden; }
.cb { width: 14px; height: 14px; border: 1px solid #b0b0b0; background: #fff; flex: none; display: flex; }
.cb svg { width: 12px; height: 12px; }
.ico { width: 13px; height: 13px; margin: 0 7px 0 8px; flex: none; }
.dot { width: 7px; height: 7px; border-radius: 50%; margin: 0 11px 0 10px; border: 1px solid #777; flex: none; }
.purple { background: #7d4f93; } .green { background: #5c855c; }
.nm { font-size: 12px; letter-spacing: -.3px; white-space: nowrap; }
.bold { font-weight: 700; letter-spacing: -.38px; }
.ul { text-decoration: underline; }
.gone { font-weight: 600; font-style: italic; color: #858585; letter-spacing: -.1px; }
.split { width: 6px; flex: none; display: flex; align-items: center; justify-content: center; }
.split i { width: 1px; height: 18px; background: repeating-linear-gradient(#aaa 0 1px, transparent 1px 3px); }

/* Map canvas */
.center { width: 980px; flex: none; margin-top: 1px; background: #fff; border: 1px solid #b4b4b4; display: flex; flex-direction: column; height: 843px; position: relative; }
.msg { height: 30px; margin: -1px -1px 0; flex: none; background: #e7f5fe; border: 1px solid #b9d8ea; display: flex; align-items: center; }
.bubble { width: 22px; height: 20px; margin-left: 10px; }
.msgtext { margin-left: 11px; color: #1f5ea8; flex: 1; font-size: 11px; letter-spacing: -.34px; }
.btn { background: linear-gradient(#fefefe, #f0f0f0); border: 1px solid #aaa; border-radius: 2px; white-space: nowrap; }
.inst { width: 90px; height: 22px; letter-spacing: -.3px; }
.mclose { width: 18px; height: 18px; margin: 0 21px 2px 25px; }
.mapview { padding: 11px 0 0 277px; }
.raster { width: 467px; height: 343px; display: grid; }
.raster > * { grid-area: 1 / 1; width: 467px; height: 343px; }
#dem { image-rendering: pixelated; }
.pins circle { fill: #81538f; stroke: #2c1f33; stroke-width: 1; }

/* Attribute table window, floating over the map */
.attr { position: absolute; left: 0; bottom: 11px; width: 970px; height: 302px; background: #efefef; border: 1px solid #b4b4b4; border-radius: 6px; box-shadow: 0 3px 8px rgba(0,0,0,.15); display: flex; flex-direction: column; overflow: hidden; }
.atitle { height: 30px; flex: none; display: flex; align-items: center; background: linear-gradient(90deg, #eff3fa, #eaf4f8); padding: 0 1px 2px 8px; font-size: 11.5px; letter-spacing: -.12px; }
.atitle span { flex: 1; }
.atitle button { width: 19px; height: 19px; margin-top: 5px; background: #c75050; border: 0; color: #fff; font: bold 11px/15px "Noto Sans", sans-serif; }
.atools { height: 32px; flex: none; display: flex; align-items: center; padding-left: 2px; border-bottom: 1px solid #b8b8b8; padding-bottom: 1px; }
.atools b { width: 25px; height: 23px; }
.atools svg { width: 16px; height: 16px; }
.atools s { width: 7px; height: 11px; flex: none; background: linear-gradient(90deg, transparent 3px, #ccc 3px 4px, transparent 4px); }
.grid { height: 208px; flex: none; display: flex; background: #fff; }
.cells { flex: 1; overflow: hidden; background: linear-gradient(#efefef 20px, #fff 20px); }
.hd, .rw { display: grid; grid-template-columns: 18px 100px 100px; width: 218px; }
.hd { height: 20px; background: linear-gradient(#fafafa, #eee); border-bottom: 1px solid #a8a8a8; font-size: 11.5px; letter-spacing: -.3px; }
.hd span { text-align: center; line-height: 22px; }
.hd span:nth-child(2) { border-right: 1px solid #bbb; }
.rw { height: 30px; font-size: 12px; letter-spacing: -.4px; }
.rw span { text-align: right; line-height: 28px; padding-right: 3px; border-right: 1px solid #c0c0c0; border-bottom: 1px solid #c0c0c0; background: #fff; }
.rw:nth-child(odd) span { background: #e8e7e3; }
.rw:last-child span:not(:first-child) { background: #fff; }
.rw span:first-child { text-align: left; padding: 1px 0 0 2px; background: linear-gradient(90deg, #fafafa, #eee); border-color: #a8a8a8; }
.rw span.pick { border: 2px solid #0cf07a; background: linear-gradient(#f8fcff, #e6f2fd); line-height: 25px; padding-right: 2px; }
.sbar { width: 14px; margin-right: 1px; border-left: 1px solid #b0b0b0; display: flex; flex-direction: column; background: #dedede; }
.sbar span { background: #f9f9f9; border-bottom: 1px solid #b4b4b4; display: flex; align-items: center; justify-content: center; }
.sbar .up { height: 14px; } .sbar .thumb { height: 55px; }
.sbar .track { flex: 1; background: #dedede; } .sbar .down { height: 14px; border: 0; }
.sbar .up::before { content: ""; border: 4px solid transparent; border-bottom: 4px solid #555; border-top: 0; }
.sbar .down::before { content: ""; border: 4px solid transparent; border-top: 4px solid #555; border-bottom: 0; }
.afoot { flex: 1; border-top: 1px solid #b8b8b8; display: flex; align-items: center; padding: 0 3px 0 2px; }
.afoot b { width: 24px; height: 23px; }
.afoot svg { width: 14px; height: 14px; }
.show { width: 121px; height: 23px; display: flex; align-items: center; padding-left: 3px; margin-right: auto; letter-spacing: -.3px; }
.show span { margin-left: 3px; flex: 1; text-align: left; }
.show i { border: 2px solid transparent; border-top: 3px solid #555; border-bottom: 0; margin: 12px 2px 0 0; }

/* Agent dock */
.agent { padding-left: 5px; display: flex; flex-direction: column; flex: 1; min-width: 0; }
.agent .docktitle svg:last-child { margin-right: 1px; }
.tabs { height: 31px; padding-left: 5px; display: flex; align-items: flex-end; flex: none; margin-bottom: -1px; z-index: 1; }
.tabs span { height: 22px; border: 1px solid #b4b4b4; border-left: 0; border-radius: 2px 2px 0 0; background: linear-gradient(#ececec, #e3e3e3); text-align: center; line-height: 21px; white-space: nowrap; }
.tabs .act { height: 24px; background: #fcfcfc; border-left: 1px solid #b4b4b4; border-bottom-color: #fcfcfc; }
.t1 { width: 92px; } .t2 { width: 62px; } .t3 { width: 96px; } .t4 { width: 63px; } .t5 { width: 45px; }
.pane { margin: 0 9px 0 5px; height: 757px; flex: none; background: #fcfcfc; border: 1px solid #b0b0b0; padding: 10px 10px 0; display: flex; flex-direction: column; }
.log { height: 242px; flex: none; background: #fff; border: 1px solid #000; display: flex; }
.logtext { flex: 1; padding: 0 0 0 4px; line-height: 14px; white-space: nowrap; letter-spacing: -.28px; }
.cm { color: #808080; }
.ticks { letter-spacing: 2px; }
.dash { letter-spacing: .2px; }
.dash2 { letter-spacing: 0; }
.run { letter-spacing: -.08px; }
.gap2 { margin-top: 28px; } .gap4 { margin-top: 56px; }
.wbar { width: 14px; flex: none; border-left: 1px solid #000; border-right: 1px solid #000; display: flex; flex-direction: column; background: #efefef; }
.wbar span { background: #f0f0f0; flex: none; display: flex; align-items: center; justify-content: center; }
.wbar .up, .wbar .down, .wbar .knob { height: 14px; margin-left: -1px; border: 1px solid #fff; border-right-color: #777; border-bottom-color: #777; }
.wbar .knob { height: 25px; }
.wbar .gap { flex: 1; background: #efefef; }
.up::before { content: ""; border: 2.5px solid transparent; border-bottom: 3px solid #555; border-top: 0; }
.down::before { content: ""; border: 2.5px solid transparent; border-top: 3px solid #555; border-bottom: 0; }
.chat { height: 242px; flex: none; margin-top: 6px; border: 2px solid #55aaff; border-radius: 10px; background: #f0f0f0; padding: 9px 0 0 14px; line-height: 14px; white-space: nowrap; letter-spacing: -.26px; }
.ask { height: 140px; flex: none; margin-top: 6px; border: 5px solid #55aaff; border-radius: 10px; background: #fff; padding: 9px 0 0 9px; font-weight: 700; font-size: 16px; line-height: 22px; letter-spacing: -.44px; white-space: nowrap; }
.datarow { display: flex; align-items: center; margin-top: 6px; height: 60px; flex: none; }
.data { width: 442px; height: 60px; border: 1px solid #000; background: #fff; display: flex; margin-right: 6px; overflow: hidden; }
.paths { flex: 1; padding: 4px 0 0 4px; line-height: 14px; white-space: nowrap; overflow: hidden; letter-spacing: -.3px; }
.load { width: 65px; height: 40px; }
.sendrow { display: flex; align-items: center; margin-top: 6px; height: 28px; flex: none; gap: 6px; }
.send { width: 391px; height: 28px; background: linear-gradient(#b4dafe, #84bffb); border: 1px solid #3f7fbf; border-radius: 2px; font-weight: 700; font-size: 13px; letter-spacing: 0; }
.intr { width: 60px; height: 22px; } .clr { width: 50px; height: 22px; }
.btabs { margin-top: 11px; margin-left: -5px; display: flex; height: 23px; align-items: flex-start; border-top: 1px solid #bbb; }
.bt { height: 22px; line-height: 23px; text-align: center; white-space: nowrap; letter-spacing: -.35px; }
.bt.act { width: 217px; height: 23px; margin-top: -1px; background: #fafafa; border: 1px solid #b0b0b0; border-top: 0; border-radius: 0 0 2px 2px; }
.pt { width: 118px; background: #dcdcdc; border: 1px solid #b8b8b8; border-left: 0; border-top: 0; line-height: 20px; letter-spacing: -.27px; }

/* Status bar */
.status { height: 30px; flex: none; display: flex; align-items: center; border-bottom: 1px solid #b4b4b4; }
.status > * { flex: none; }
.search { width: 199px; height: 22px; margin-left: 1px; border: 1px solid #aaa; border-radius: 2px; background: #fff; color: #777; display: flex; align-items: center; padding-left: 7px; letter-spacing: -.12px; }
.search svg { width: 14px; height: 14px; margin-right: 6px; }
.lab { white-space: nowrap; width: 26px; }
.c1 { margin-left: auto; width: 56px; }
.fld { height: 22px; border: 1px solid #aaa; border-radius: 2px; background: #fff; display: flex; align-items: center; padding-left: 4px; letter-spacing: 0; }
.coord { width: 115px; padding-left: 6px; white-space: nowrap; }
.mouse { width: 16px; height: 16px; margin: 0 13px 0 4px; }
.scale { width: 81px; margin-left: 3px; }
.fld i { margin-left: auto; height: 20px; border-left: 1px solid #bbb; width: 19px; display: flex; flex-direction: column; gap: 4px; align-items: center; justify-content: center; }
.fld i.sp { width: 14px; }
.dd::after, .sp::after { content: ""; border: 3.5px solid transparent; border-top: 4px solid #555; border-bottom: 0; }
.sp::before { content: ""; border: 3.5px solid transparent; border-bottom: 4px solid #555; border-top: 0; }
.lock { width: 14px; height: 16px; margin: 0 8px 0 11px; }
.mg { width: 48px; letter-spacing: -.4px; } .mag { width: 84px; }
.rt { margin-left: 9px; width: 50px; } .rot { width: 84px; margin-right: 6px; }
.status .cb { margin-right: 5px; }
.rd { width: 35px; }
.globe { width: 16px; height: 16px; margin: 0 3px 0 14px; }
.ep { width: 54px; }
.talk { width: 17px; height: 17px; margin: 0 7px 0 22px; }
.deskstrip { flex: 1; background: linear-gradient(90deg, #d3e9f2, #dce8f4 50%, #d5ebf4); }
```
FILE: dem.js
```js
// Elevation samples, 24 columns by 18 rows, as grey levels.
const rows = [
  [225,235,240,225,170,190,205,150,120,90,85,115,110,120,145,150,140,110,90,60,10,5,15,30],
  [190,200,215,220,160,135,140,80,75,75,110,115,125,140,150,140,110,110,120,90,40,12,8,5],
  [160,160,160,160,125,120,145,85,70,72,85,90,125,135,120,110,120,125,125,95,40,20,5,5],
  [215,220,210,185,115,110,120,125,120,130,125,120,130,135,125,105,90,90,85,65,35,10,5,20],
  [215,200,190,170,150,130,100,150,155,170,160,160,155,155,145,130,95,70,50,40,30,8,3,10],
  [205,185,170,185,180,165,115,125,160,165,168,160,160,185,170,150,110,95,80,60,20,5,5,15],
  [180,170,170,178,175,145,120,150,165,165,168,170,165,185,182,150,120,108,110,95,60,20,20,50],
  [175,175,175,165,155,115,180,180,190,190,180,185,180,172,165,150,125,110,95,70,40,55,110,110],
  [155,158,150,135,128,150,205,190,185,190,205,190,180,150,150,135,115,75,75,105,75,65,130,110],
  [158,155,150,122,130,160,190,200,205,215,210,195,170,150,130,100,75,70,110,120,85,110,120,75],
  [155,138,120,125,150,190,205,215,225,230,210,200,165,130,110,100,95,100,130,110,85,130,100,60],
  [150,145,150,130,195,222,225,220,230,210,195,185,160,130,115,130,140,125,110,80,100,140,85,45],
  [165,180,175,150,170,215,222,205,190,185,185,165,148,150,150,150,140,115,80,70,110,150,95,50],
  [190,205,190,170,148,160,190,185,175,170,165,150,150,155,150,150,138,95,80,85,140,158,100,55],
  [215,235,215,190,180,140,150,178,180,165,160,172,175,155,115,85,85,90,110,120,140,145,95,110],
  [225,225,190,190,175,165,140,180,190,190,182,205,180,140,110,100,95,110,115,105,90,80,75,110],
  [245,245,200,190,180,160,165,178,205,208,190,182,150,120,112,115,120,125,130,110,95,85,95,95],
  [240,235,200,190,185,170,165,150,155,160,160,150,130,110,110,110,120,125,125,120,110,100,90,95]
];

// Ridges and valleys: [grey, alpha, width, x1, y1, x2, y2, ...] in map pixels.
const lines = [
  [60, .45, 9, 120, 62, 132, 92, 120, 118, 98, 150, 82, 178],
  [70, .35, 9, 82, 178, 58, 215, 66, 240, 100, 265, 118, 300],
  [110, .4, 7, 0, 34, 80, 35, 120, 20],
  [15, .6, 11, 440, 60, 420, 115, 388, 143, 350, 168, 322, 182],
  [15, .55, 9, 430, 90, 375, 82, 350, 95, 335, 112],
  [30, .5, 8, 440, 78, 370, 68, 305, 62],
  [45, .5, 8, 400, 145, 388, 185, 365, 220, 342, 245, 320, 275],
  [45, .5, 8, 467, 160, 445, 210, 435, 250, 420, 300],
  [60, .4, 9, 320, 178, 290, 190, 262, 210],
  [70, .35, 14, 300, 290, 260, 285, 240, 325],
  [50, .4, 12, 140, 45, 190, 15, 215, 30],
  [235, .4, 12, 5, 10, 70, 16],
  [225, .35, 14, 90, 225, 140, 205, 190, 185],
  [200, .4, 9, 195, 300, 235, 275],
  [190, .3, 10, 250, 140, 275, 95],
  [165, .4, 9, 385, 265, 405, 235],
  [140, .4, 8, 345, 115, 390, 112],
  [135, .35, 10, 320, 42, 380, 34],
  [150, .35, 8, 365, 185, 350, 205],
  [240, .4, 10, 5, 310, 25, 335]
];

const points = [
  [223.5,24],[288.5,23],[442.6,12],[319.5,111],[12.6,127],[31.6,133],[40.4,150],
  [193.8,136],[185.6,144],[171.7,149],[173.6,161],[257.6,207],[411.7,215],
  [282.9,229],[185.6,234],[259.5,253],[55.6,246],[60,261],[38.5,286],[120,318]
];

const canvas = document.getElementById("dem");
const W = canvas.width, H = canvas.height;
const ctx = canvas.getContext("2d");
const img = ctx.createImageData(W, H);
const at = (c, r) => rows[Math.max(0, Math.min(17, r))][Math.max(0, Math.min(23, c))];
for (let y = 0; y < H; y++) {
  for (let x = 0; x < W; x++) {
    const gx = (x + .5) / W * 24 - .5, gy = (y + .5) / H * 18 - .5;
    const c = Math.floor(gx), r = Math.floor(gy), u = gx - c, v = gy - r;
    const g = (at(c, r) * (1 - u) + at(c + 1, r) * u) * (1 - v) + (at(c, r + 1) * (1 - u) + at(c + 1, r + 1) * u) * v;
    const i = (y * W + x) * 4;
    img.data[i] = img.data[i + 1] = img.data[i + 2] = g;
    img.data[i + 3] = 255;
  }
}
ctx.putImageData(img, 0, 0);
ctx.scale(W / 467, H / 343);
ctx.lineCap = ctx.lineJoin = "round";
ctx.filter = "blur(0.8px)";
for (const [g, a, w, ...p] of lines) {
  ctx.strokeStyle = `rgba(${g},${g},${g},${a})`;
  ctx.lineWidth = w;
  ctx.beginPath();
  ctx.moveTo(p[0], p[1]);
  for (let i = 2; i < p.length; i += 2) ctx.lineTo(p[i], p[i + 1]);
  ctx.stroke();
}

// Surface roughness: fine noise plus blotches two cells across.
let seed = 7;
const rnd = () => (seed = (seed * 16807) % 2147483647) / 2147483647 - .5;
const coarse = Array.from({ length: 40 * 28 }, rnd);
const out = ctx.getImageData(0, 0, W, H);
for (let y = 0; y < H; y++) {
  for (let x = 0; x < W; x++) {
    const i = (y * W + x) * 4;
    const k = out.data[i] > 50 ? 1 : .3;
    const g = out.data[i] + k * (rnd() * 10 + coarse[(y >> 1) * 40 + (x >> 1)] * 16);
    out.data[i] = out.data[i + 1] = out.data[i + 2] = g;
  }
}
ctx.putImageData(out, 0, 0);

const svg = document.getElementById("pins");
for (const [x, y] of points) {
  const c = document.createElementNS("http://www.w3.org/2000/svg", "circle");
  c.setAttribute("cx", x);
  c.setAttribute("cy", y);
  c.setAttribute("r", 4);
  svg.appendChild(c);
}
```
